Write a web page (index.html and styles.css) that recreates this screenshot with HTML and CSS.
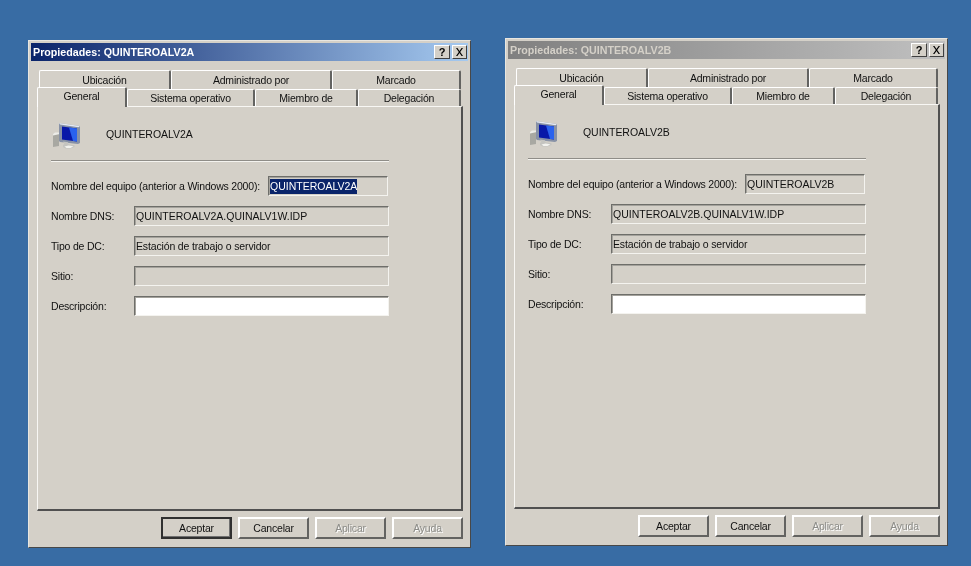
FILE: index.html
```html
<!DOCTYPE html>
<html lang="en">
<head>
    <meta charset="UTF-8">
    <title>Propiedades</title>
    <link rel="stylesheet" href="styles.css">
</head>
<body>
    <!-- Active window -->
    <div class="window window-a">
        <div class="titlebar">
            <span class="title">Propiedades: QUINTEROALV2A</span>
            <span class="caption-btn">?</span>
            <span class="caption-btn caption-close">
                <svg width="9" height="8" viewBox="0 0 9 8"><path d="M1 0h1.400l2.100 3 2.100-3H8L5.200 4 8 8H6.600L4.500 5 2.400 8H1l2.800-4z" fill="#000"/></svg>
            </span>
        </div>
        <div class="tabs">
            <div class="tab-row tab-row-back">
                <div class="tab">Ubicación</div>
                <div class="tab">Administrado por</div>
                <div class="tab">Marcado</div>
            </div>
            <div class="tab-row tab-row-front">
                <div class="tab tab-selected">General</div>
                <div class="tab">Sistema operativo</div>
                <div class="tab">Miembro de</div>
                <div class="tab">Delegación</div>
            </div>
        </div>
        <div class="panel">
            <div class="identity">
                <svg class="computer-icon" width="28" height="26" viewBox="0 0 28 26">
                    <path d="M0 11l6-1v13l-6 1z" fill="#a8a8a2"/>
                    <path d="M0 11l2-1.500h5V11l-7 1.500z" fill="#ecece8"/>
                    <path d="M6 0l21 3v17l-2 1-18-2-1-1z" fill="#8791a6"/>
                    <path d="M6 0l21 3-1.500 1.200L7 1.500z" fill="#e6eaf2"/>
                    <path d="M9 3.500l15 2v13L9 16.500z" fill="#0818a8"/>
                    <path d="M16 4.500l8 1v13l-4-.5z" fill="#2a62ee"/>
                    <path d="M10 18.500l5 .8.500 2 6 1V24l-4 1.500h-5L10 24v-2l1.500-1z" fill="#c4c4c0"/>
                    <path d="M11.500 23.500l4-1 5 .8-3 1.700h-4z" fill="#f2f2ee"/>
                </svg>
                <span class="computer-name">QUINTEROALV2A</span>
            </div>
            <div class="separator"></div>
            <div class="field field-first">
                <label class="label-long">Nombre del equipo (anterior a Windows 2000):</label>
                <div class="input input-short"><span class="selected-text">QUINTEROALV2A</span></div>
            </div>
            <div class="field">
                <label>Nombre DNS:</label>
                <div class="input">QUINTEROALV2A.QUINALV1W.IDP</div>
            </div>
            <div class="field">
                <label>Tipo de DC:</label>
                <div class="input input-mixed">Estación de trabajo o servidor</div>
            </div>
            <div class="field">
                <label>Sitio:</label>
                <div class="input"></div>
            </div>
            <div class="field">
                <label>Descripción:</label>
                <div class="input input-white"></div>
            </div>
        </div>
        <div class="buttons">
            <div class="button button-default">Aceptar</div>
            <div class="button">Cancelar</div>
            <div class="button button-disabled">Aplicar</div>
            <div class="button button-disabled">Ayuda</div>
        </div>
    </div>

    <!-- Inactive window -->
    <div class="window window-b">
        <div class="titlebar titlebar-inactive">
            <span class="title">Propiedades: QUINTEROALV2B</span>
            <span class="caption-btn">?</span>
            <span class="caption-btn caption-close">
                <svg width="9" height="8" viewBox="0 0 9 8"><path d="M1 0h1.400l2.100 3 2.100-3H8L5.200 4 8 8H6.600L4.500 5 2.400 8H1l2.800-4z" fill="#000"/></svg>
            </span>
        </div>
        <div class="tabs">
            <div class="tab-row tab-row-back">
                <div class="tab">Ubicación</div>
                <div class="tab">Administrado por</div>
                <div class="tab">Marcado</div>
            </div>
            <div class="tab-row tab-row-front">
                <div class="tab tab-selected">General</div>
                <div class="tab">Sistema operativo</div>
                <div class="tab">Miembro de</div>
                <div class="tab">Delegación</div>
            </div>
        </div>
        <div class="panel">
            <div class="identity">
                <svg class="computer-icon" width="28" height="26" viewBox="0 0 28 26">
                    <path d="M0 11l6-1v13l-6 1z" fill="#a8a8a2"/>
                    <path d="M0 11l2-1.500h5V11l-7 1.500z" fill="#ecece8"/>
                    <path d="M6 0l21 3v17l-2 1-18-2-1-1z" fill="#8791a6"/>
                    <path d="M6 0l21 3-1.500 1.200L7 1.500z" fill="#e6eaf2"/>
                    <path d="M9 3.500l15 2v13L9 16.500z" fill="#0818a8"/>
                    <path d="M16 4.500l8 1v13l-4-.5z" fill="#2a62ee"/>
                    <path d="M10 18.500l5 .8.500 2 6 1V24l-4 1.500h-5L10 24v-2l1.500-1z" fill="#c4c4c0"/>
                    <path d="M11.500 23.500l4-1 5 .8-3 1.700h-4z" fill="#f2f2ee"/>
                </svg>
                <span class="computer-name">QUINTEROALV2B</span>
            </div>
            <div class="separator"></div>
            <div class="field field-first">
                <label class="label-long">Nombre del equipo (anterior a Windows 2000):</label>
                <div class="input input-short">QUINTEROALV2B</div>
            </div>
            <div class="field">
                <label>Nombre DNS:</label>
                <div class="input">QUINTEROALV2B.QUINALV1W.IDP</div>
            </div>
            <div class="field">
                <label>Tipo de DC:</label>
                <div class="input input-mixed">Estación de trabajo o servidor</div>
            </div>
            <div class="field">
                <label>Sitio:</label>
                <div class="input"></div>
            </div>
            <div class="field">
                <label>Descripción:</label>
                <div class="input input-white"></div>
            </div>
        </div>
        <div class="buttons">
            <div class="button">Aceptar</div>
            <div class="button">Cancelar</div>
            <div class="button button-disabled">Aplicar</div>
            <div class="button button-disabled">Ayuda</div>
        </div>
    </div>
</body>
</html>
```

FILE: styles.css
```css
html, body {
    margin: 0;
    padding: 0;
    height: 100%;
    overflow: hidden;
    background-color: #386ca4;
    font-family: "Liberation Sans", Arial, sans-serif;
    font-size: 10.5px;
    letter-spacing: -0.2px;
    color: #111;
}

/* Windows sit on a desktop, so these two are placed by coordinates */
.window {
    position: absolute;
    box-sizing: border-box;
    width: 443px;
    height: 508px;
    padding: 2px;
    background-color: #d4d0c8;
    border: 1px solid;
    border-color: #e8e6e0 #484848 #484848 #e8e6e0;
    white-space: nowrap;
    filter: blur(0.4px);
}

.window-a {
    left: 28px;
    top: 40px;
}

.window-b {
    left: 505px;
    top: 38px;
}

.titlebar {
    display: flex;
    align-items: center;
    height: 18px;
    padding: 0 1px 0 2px;
    background: linear-gradient(to right, #0a246a, #a6caf0);
}

.titlebar-inactive {
    background: linear-gradient(to right, #808080, #c0c0c0);
}

.title {
    flex: 1;
    color: #fff;
    font-weight: bold;
    font-size: 10.7px;
    letter-spacing: 0;
}

.titlebar-inactive .title {
    color: #d4d0c8;
}

.caption-btn {
    box-sizing: border-box;
    display: flex;
    align-items: center;
    justify-content: center;
    width: 16px;
    height: 14px;
    background-color: #d4d0c8;
    border: 1px solid;
    border-color: #fff #404040 #404040 #fff;
    font-weight: bold;
    font-size: 11px;
    color: #000;
}

.caption-close {
    width: 15px;
    margin-left: 2px;
}

.tabs {
    margin: 9px 5px 0 6px;
    padding-right: 2px;
}

.tab-row {
    display: grid;
}

.tab-row-back {
    grid-template-columns: 132px 161px 129px;
    height: 19px;
    margin-left: 2px;
}

.tab-row-front {
    grid-template-columns: 90px 128px 103px 103px;
    height: 17px;
}

.tab {
    box-sizing: border-box;
    display: flex;
    align-items: center;
    justify-content: center;
    background-color: #d4d0c8;
    border: 1px solid #fff;
    border-bottom: none;
    border-right: 2px solid #636361;
    border-radius: 2px 2px 0 0;
}

.tab-row-back .tab {
    height: 19px;
}

.tab-row-front .tab {
    height: 17px;
}

.tab-row-front .tab-selected {
    position: relative;
    z-index: 1;
    height: 20px;
    margin-top: -2px;
    padding-bottom: 4px;
}

.panel {
    box-sizing: border-box;
    height: 405px;
    margin: 0 5px 0 6px;
    padding: 16px 0 0 13px;
    background-color: #d4d0c8;
    border: 1px solid #f8f7f4;
    border-right: 2px solid #505050;
    border-bottom: 2px solid #505050;
}

.identity {
    display: flex;
    align-items: center;
    gap: 25px;
    height: 26px;
    margin-left: 2px;
}

.computer-icon {
    flex: none;
}

.computer-name {
    margin-bottom: 4px;
    letter-spacing: -0.05px;
}

.separator {
    width: 338px;
    height: 1px;
    margin-top: 11px;
    background-color: #8f8d88;
    border-bottom: 1px solid #f4f3ef;
}

.field {
    display: flex;
    align-items: center;
    height: 20px;
    margin-top: 10px;
}

.field-first {
    margin-top: 14px;
}

.field label {
    flex: none;
    width: 83px;
}

.field .label-long {
    width: 217px;
}

.input {
    box-sizing: border-box;
    display: flex;
    align-items: center;
    width: 255px;
    height: 20px;
    padding-left: 1px;
    background-color: #d4d0c8;
    border: 1px solid;
    border-color: #6e6e6a #f4f3ef #f4f3ef #6e6e6a;
    box-shadow: inset 1px 1px 0 #a4a29c;
    letter-spacing: 0;
}

.input-short {
    width: 120px;
}

.input-mixed {
    letter-spacing: -0.15px;
}

.input-white {
    background-color: #fff;
}

.selected-text {
    background-color: #0a246a;
    color: #fff;
    line-height: 15px;
}

.buttons {
    display: flex;
    justify-content: flex-end;
    gap: 6px;
    margin: 6px 5px 0 0;
}

.button {
    box-sizing: border-box;
    display: flex;
    align-items: center;
    justify-content: center;
    width: 71px;
    height: 22px;
    background-color: #d4d0c8;
    border: 2px solid;
    border-color: #fff #636361 #636361 #fff;
}

.button-default {
    border-color: #303030;
    box-shadow: inset -1px -1px 0 #707070;
}

.button-disabled {
    color: #8c8c88;
    text-shadow: 1px 1px 0 #fff;
}
```
